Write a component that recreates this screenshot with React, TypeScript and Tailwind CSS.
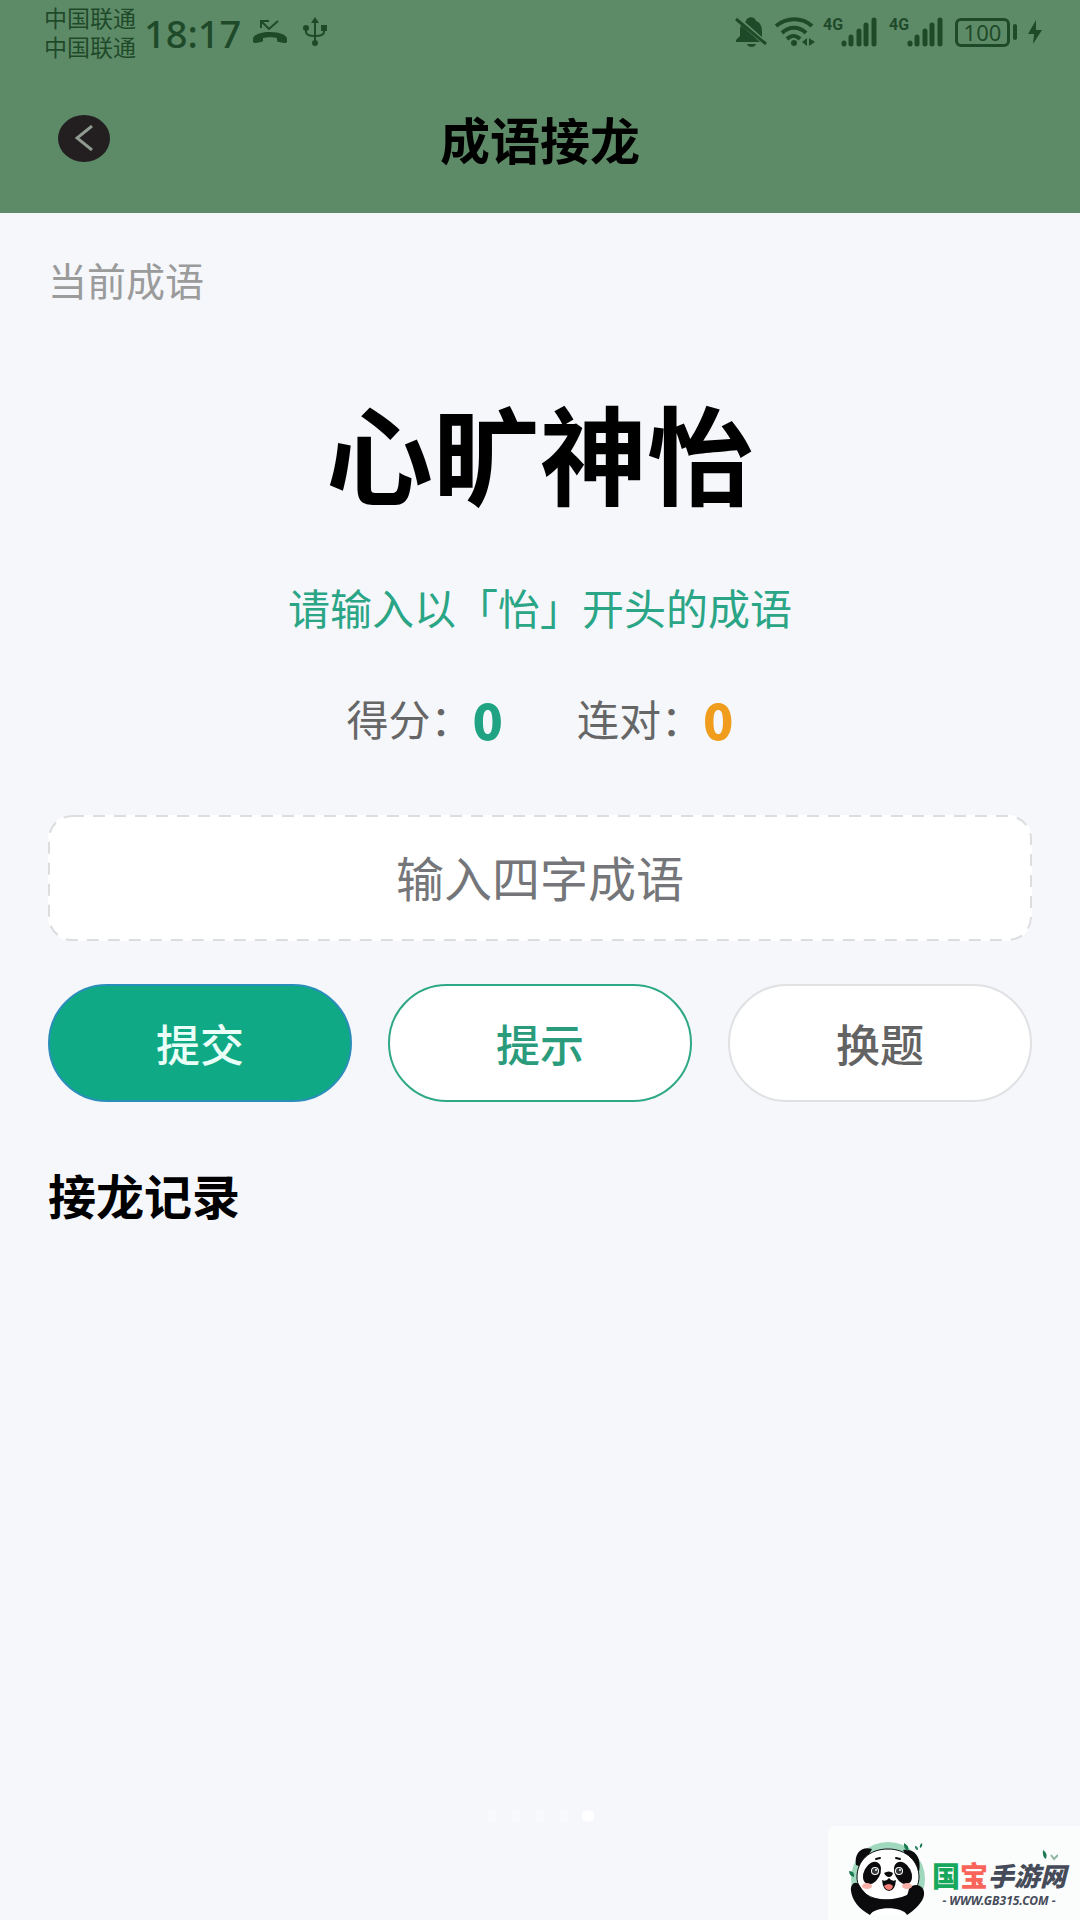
import React, { useState } from 'react';

const idiom = '心旷神怡';

const stats = [
  { id: 'score', label: '得分：', value: 0, color: 'text-[#1fa382]' },
  { id: 'streak', label: '连对：', value: 0, color: 'text-[#f09c1c]' },
];

const actions = [
  { label: '提交', style: 'bg-[#10a986] border-[#2a8fb8] text-[#e9fff8]' },
  { label: '提示', style: 'bg-white border-[#2fa886] text-[#2a9c7c]' },
  { label: '换题', style: 'bg-white border-[#dfe1e3] text-[#636363]' },
];

function MissedCallIcon() {
  return (
    <svg className="w-[34px] h-6" viewBox="0 0 34 24" fill="none" stroke="currentColor">
      <path d="M8 8V1h8M8 1l8 8 9-8" strokeWidth="2" />
      <path
        d="M0 19c0-4 7-7 17-7s17 3 17 7v2c0 2-1 2-3 2l-5-1c-2 0-2-1-2-2v-2c-4-1-10-1-14 0v2c0 1 0 2-2 2l-5 1c-2 0-3 0-3-2z"
        fill="currentColor"
        stroke="none"
      />
    </svg>
  );
}

function UsbIcon() {
  return (
    <svg className="w-6 h-[30px]" viewBox="0 0 24 30" fill="currentColor">
      <path d="M12 0l4 6H8z" />
      <path d="M12 4v22M3 12v3c0 3 3 4 9 4M21 12v3c0 3-3 4-9 4" fill="none" stroke="currentColor" strokeWidth="2" />
      <circle cx="3" cy="11" r="3" />
      <path d="M18 8h6v6h-6z" />
      <circle cx="12" cy="26" r="3" />
    </svg>
  );
}

function BellOffIcon() {
  return (
    <svg className="w-8 h-[30px]" viewBox="0 0 32 30" fill="currentColor">
      <path d="M11 4c1-5 9-5 10 0 5 2 6 6 6 11v5L10 5zM6 8l19 17H1v-2l4-4v-7zM12 27h9c-1 4-8 4-9 0z" />
      <path d="M1 2l30 25" stroke="currentColor" strokeWidth="3" />
    </svg>
  );
}

function WifiIcon() {
  return (
    <svg className="w-10 h-[30px]" viewBox="0 0 40 30" fill="none" stroke="currentColor" strokeWidth="4">
      <path d="M1 9C12 0 27 0 37 9M7 16c7-7 17-7 24 0M12 22c4-4 9-4 13 0" />
      <circle cx="19" cy="26" r="3" fill="currentColor" stroke="none" />
      <path d="M32 21v8l-5-4zM34 21v8l6-4z" fill="currentColor" stroke="none" />
    </svg>
  );
}

function Signal() {
  return (
    <div className="flex items-start">
      <span className="w-[18px] text-[16px] leading-4 font-bold font-[Roboto,sans-serif]">4G</span>
      <svg className="w-9 h-[30px]" viewBox="0 0 36 30" stroke="currentColor" strokeWidth="5" strokeLinecap="round">
        <path d="M3 26v1M10 20v7M18 14v13M25 8v19M33 3v24" />
      </svg>
    </div>
  );
}

function Battery() {
  return (
    <div className="flex items-center gap-[3px]">
      <span className="flex h-[29px] w-[55px] items-center justify-center rounded-md border-[3px] border-current text-[22px] leading-none">
        100
      </span>
      <span className="h-4 w-1 rounded-sm bg-current" />
      <svg className="ml-2 h-6 w-[14px]" viewBox="0 0 14 24" fill="currentColor">
        <path d="M8 0L0 14h6L5 24l9-14H8z" />
      </svg>
    </div>
  );
}

function StatusBar() {
  return (
    <div className="flex h-[66px] items-start justify-between pl-11 pr-[38px] text-[#1f4a2a]">
      <div className="flex items-start">
        <div className="pt-[5px] text-[23px] leading-[29px] font-['Liberation_Sans','Noto_Sans_CJK_SC',sans-serif]">
          <p>中国联通</p>
          <p>中国联通</p>
        </div>
        <span className="ml-2 pt-[11px] text-[38px] leading-[44px] font-medium font-['Noto_Sans',sans-serif]">18:17</span>
        <div className="flex items-center gap-4 pl-3 pt-[17px]">
          <MissedCallIcon />
          <UsbIcon />
        </div>
      </div>
      <div className="flex items-center gap-3 pt-[17px] font-['Noto_Sans',sans-serif]">
        <div className="flex gap-2">
          <BellOffIcon />
          <WifiIcon />
          <Signal />
        </div>
        <Signal />
        <Battery />
      </div>
    </div>
  );
}

function Panda() {
  return (
    <svg className="h-[74px] w-[78px] shrink-0" viewBox="0 0 78 74">
      <circle cx="40" cy="38" r="37" fill="#9fd8bd" />
      <path d="M8 24C6 13 13 5 24 8L14 26zM55 9c12-2 19 8 16 22l-6-1z" fill="#0b0b0d" />
      <path
        d="M40 8c19 0 31 13 31 28 0 15-13 23-31 23S9 51 9 36C9 20 21 8 40 8z"
        fill="#fff"
        stroke="#0b0b0d"
        strokeWidth="1"
      />
      <path
        d="M3 50c-1-8 6-11 9-5 3 5 6 8 10 11 10 4 26 3 37-2 2-3 1-8 5-9 7-3 13 2 12 9-1 7-9 15-17 20H22C11 68 4 59 3 50z"
        fill="#0b0b0d"
      />
      <path d="M22 74c4-9 33-9 37 0z" fill="#fff" />
      <ellipse cx="24" cy="32" rx="8" ry="12" fill="#0b0b0d" transform="rotate(28 24 32)" />
      <ellipse cx="55" cy="32" rx="8" ry="12" fill="#0b0b0d" transform="rotate(-28 55 32)" />
      <circle cx="27" cy="30" r="4" fill="#fff" />
      <circle cx="27" cy="30" r="3" fill="#33363a" />
      <circle cx="51" cy="30" r="4" fill="#fff" />
      <circle cx="51" cy="30" r="3" fill="#33363a" />
      <circle cx="28" cy="29" r="1" fill="#fff" />
      <circle cx="52" cy="29" r="1" fill="#fff" />
      <path d="M28 18l4-1M48 17l4 1" stroke="#0b0b0d" strokeWidth="2" strokeLinecap="round" />
      <ellipse cx="19" cy="45" rx="5" ry="3" fill="#f9b0a8" />
      <ellipse cx="59" cy="45" rx="5" ry="3" fill="#f9b0a8" />
      <path d="M36 32q5-3 9 0-1 4-4 4t-5-4z" fill="#0b0b0d" />
      <path d="M34 39q4 2 7-2 3 4 7 2-1 11-7 11t-7-11z" fill="#0b0b0d" />
      <path d="M36 45q5-4 9 0-1 4-4 4t-5-4z" fill="#f47c74" />
      <path d="M56 2q6 3 4 8-5-3-4-8zM67 5q3 0 3 4-3 0-3-4zM74 2q1 4-2 5-1-3 2-5zM1 30q6 0 5 6-5-1-5-6zM8 35l3-5" fill="#1b7a52" />
    </svg>
  );
}

function SiteBadge() {
  return (
    <div className="absolute bottom-0 right-0 flex h-[94px] w-[252px] items-end rounded-tl-md bg-[#fbfcfc] pb-[5px] pl-5">
      <Panda />
      <div className="relative flex flex-col items-center pb-[6px] pl-[6px] italic">
        <p className="flex items-center whitespace-nowrap text-[26px] leading-[36px] font-black text-[#454b59]">
          <span className="text-[28px] not-italic text-[#17a85c]">国</span>
          <span className="text-[28px] not-italic text-[#f9655b]">宝</span>
          手游网
        </p>
        <p className="whitespace-nowrap text-[12px] leading-4 font-bold text-[#454b59] font-['Noto_Sans',sans-serif]">
          - WWW.GB315.COM -
        </p>
        <svg className="absolute -top-2 right-2 h-3 w-4" viewBox="0 0 16 12">
          <path d="M1 1q5 3 3 9-4-2-3-9z" fill="#1b7a52" />
          <path d="M9 6l3 4 4-4" fill="none" stroke="#8fb5a3" strokeWidth="2" />
        </svg>
      </div>
    </div>
  );
}

export default function App() {
  const [answer, setAnswer] = useState('');

  return (
    <div className="relative flex min-h-screen flex-col bg-[#f5f7fb] font-['Noto_Sans_CJK_SC',sans-serif]">
      <header className="h-[213px] bg-[#5e8b67]">
        <StatusBar />
        <div className="grid grid-cols-[1fr_auto_1fr] items-center px-[58px] pt-10">
          <button
            type="button"
            aria-label="返回"
            className="flex h-[47px] w-[52px] items-center justify-center rounded-[50%] bg-[#231f20]"
          >
            <svg className="h-[26px] w-[18px]" viewBox="0 0 18 26" fill="none" stroke="#8f9a91" strokeWidth="3">
              <path d="M17 1L2 13l15 12" />
            </svg>
          </button>
          <h1 className="text-[50px] leading-[64px] font-bold text-black">成语接龙</h1>
        </div>
      </header>

      <main className="flex-1 px-12 pt-[38px]">
        <p className="text-[39px] leading-[56px] text-[#9b9b9b]">当前成语</p>
        <p className="mt-20 text-center text-[107px] leading-[128px] font-bold text-black">{idiom}</p>
        <p className="mt-16 text-center text-[42px] leading-[56px] text-[#2aa585]">
          请输入以「{idiom.slice(-1)}」开头的成语
        </p>

        <div className="mt-[55px] flex justify-center gap-[74px]">
          {stats.map((stat) => (
            <div key={stat.id} className="flex items-center text-[42px] leading-[56px] text-[#666666]">
              <span>{stat.label}</span>
              <span className={`text-[50px] font-black ${stat.color}`}>{stat.value}</span>
            </div>
          ))}
        </div>

        <div className="relative mt-[69px]">
          <input
            type="text"
            aria-label="输入四字成语"
            placeholder="输入四字成语"
            value={answer}
            onChange={(e) => setAnswer(e.target.value)}
            className="block h-[126px] w-full rounded-3xl bg-white pb-1 text-center text-[48px] text-black outline-none placeholder:text-[#757679]"
          />
          <svg className="pointer-events-none absolute inset-0 h-full w-full" fill="none">
            <rect
              x="1"
              y="1"
              rx="23"
              className="h-[calc(100%-2px)] w-[calc(100%-2px)]"
              stroke="#dcdddf"
              strokeWidth="2"
              strokeDasharray="12 9"
            />
          </svg>
        </div>

        <div className="mt-[43px] grid grid-cols-3 gap-9">
          {actions.map((action) => (
            <button
              key={action.label}
              type="button"
              className={`h-[118px] rounded-full border-2 text-[44px] font-medium ${action.style}`}
            >
              {action.label}
            </button>
          ))}
        </div>

        <h2 className="mt-16 text-[48px] leading-[56px] font-bold text-black">接龙记录</h2>
      </main>

      <div className="flex items-center justify-center gap-3 pb-[98px]">
        <span className="h-3 w-3 rounded-full bg-[#f8f9fc]" />
        <span className="h-3 w-3 rounded-full bg-[#f8f9fc]" />
        <span className="h-3 w-3 rounded-full bg-[#f8f9fc]" />
        <span className="h-3 w-3 rounded-full bg-[#f8f9fc]" />
        <span className="h-3 w-3 rounded-full bg-white" />
      </div>

      <SiteBadge />
    </div>
  );
}
